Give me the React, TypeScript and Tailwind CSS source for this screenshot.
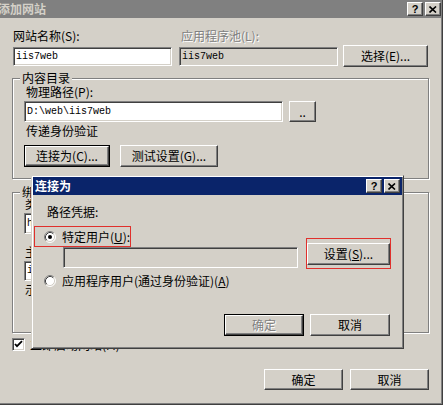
import type { ReactNode } from 'react';

// 经典 Windows 风格：添加网站 + 连接为 对话框

const RAISED =
  'border border-t-white border-l-white border-r-[#404040] border-b-[#404040] shadow-[inset_-1px_-1px_#808080]';
const SUNKEN =
  'border border-t-[#808080] border-l-[#808080] border-r-white border-b-white shadow-[inset_1px_1px_#404040,inset_-1px_-1px_#d4d0c8]';

function Btn({
  children,
  className = '',
  def = false,
  disabled = false,
}: {
  children: ReactNode;
  className?: string;
  def?: boolean;
  disabled?: boolean;
}) {
  return (
    <div className={`${className} bg-[#d4d0c8] ${def ? 'border border-black' : ''}`}>
      <div className={`flex h-full w-full items-center justify-center ${RAISED}`}>
        <span className={disabled ? 'text-[#808080] [text-shadow:1px_1px_0_#fff]' : 'text-black'}>
          {children}
        </span>
      </div>
    </div>
  );
}

function Field({
  value = '',
  className = '',
  disabled = false,
}: {
  value?: string;
  className?: string;
  disabled?: boolean;
}) {
  return (
    <div
      className={`${className} ${SUNKEN} ${
        disabled ? 'bg-[#d4d0c8]' : 'bg-white'
      } flex items-center pl-[2px] font-['Liberation_Mono',monospace] text-[10px]`}
    >
      {value}
    </div>
  );
}

function GroupBox({
  title,
  className = '',
  children,
}: {
  title: string;
  className?: string;
  children?: ReactNode;
}) {
  return (
    <div className={`relative border border-[#808080] shadow-[inset_1px_1px_#fff,1px_1px_#fff] ${className}`}>
      <span className="absolute left-[7px] -top-[8px] bg-[#d4d0c8] px-[2px] leading-[14px]">{title}</span>
      {children}
    </div>
  );
}

function Radio({ checked = false }: { checked?: boolean }) {
  return (
    <svg width="12" height="12" viewBox="0 0 12 12" className="shrink-0">
      <circle cx="6" cy="6" r="5" fill="#fff" />
      <path d="M2.11 9.89 A5.5 5.5 0 0 1 9.89 2.11" fill="none" stroke="#808080" />
      <path d="M9.89 2.11 A5.5 5.5 0 0 1 2.11 9.89" fill="none" stroke="#fff" />
      <path d="M2.82 9.18 A4.5 4.5 0 0 1 9.18 2.82" fill="none" stroke="#404040" />
      <path d="M9.18 2.82 A4.5 4.5 0 0 1 2.82 9.18" fill="none" stroke="#d4d0c8" />
      {checked && <circle cx="6" cy="6" r="2" fill="#000" />}
    </svg>
  );
}

function CheckBox() {
  return (
    <div className={`h-[13px] w-[13px] bg-white ${SUNKEN} flex items-center justify-center`}>
      <svg width="9" height="9" viewBox="0 0 9 9">
        <polyline points="1,4 3,6.2 8,1.2" fill="none" stroke="#000" strokeWidth="1.8" />
      </svg>
    </div>
  );
}

function CapButton({ kind }: { kind: 'help' | 'close' }) {
  return (
    <div className={`h-[14px] w-[16px] bg-[#d4d0c8] ${RAISED} flex items-center justify-center`}>
      {kind === 'help' ? (
        <span className="font-['Liberation_Sans',sans-serif] text-[11px] font-bold leading-[11px] text-black">?</span>
      ) : (
        <svg width="8" height="7" viewBox="0 0 8 7">
          <path d="M0.5 0.5 L7 6.5 M7 0.5 L0.5 6.5" stroke="#000" strokeWidth="1.6" />
        </svg>
      )}
    </div>
  );
}

function ConnectAsDialog() {
  return (
    <div className="absolute left-[31px] top-[175px] flex h-[174px] w-[373px] flex-col border border-t-[#d4d0c8] border-l-[#d4d0c8] border-r-[#404040] border-b-[#404040] bg-[#d4d0c8] p-[1px] shadow-[inset_1px_1px_#fff,inset_-1px_-1px_#808080]">
      {/* 标题栏 */}
      <div className="flex h-[18px] items-center bg-[#0a246a]">
        <span className="pl-[2px] font-bold text-white">连接为</span>
        <div className="ml-auto mr-[2px] flex gap-[2px]">
          <CapButton kind="help" />
          <CapButton kind="close" />
        </div>
      </div>

      <div className="ml-[14px] mt-[10px]">路径凭据:</div>

      <div className="ml-[1px] mt-[7px] flex h-[21px] w-[97px] items-center border border-[#e0302c]">
        <div className="ml-[9px]">
          <Radio checked />
        </div>
        <span className="ml-[6px] whitespace-nowrap">
          特定用户(<span className="underline">U</span>):
        </span>
      </div>

      <div className="flex items-start">
        <Field disabled className="ml-[30px] h-[21px] w-[235px]" />
        <div className="-mt-[9px] ml-[8px] h-[31px] w-[85px] border border-[#e0302c] pt-[4px]">
          <Btn className="h-[22px] w-full">
            设置(<span className="underline">S</span>)...
          </Btn>
        </div>
      </div>

      <div className="mt-[5px] flex h-[14px] items-center">
        <div className="ml-[11px]">
          <Radio />
        </div>
        <span className="ml-[6px] whitespace-nowrap">
          应用程序用户(通过身份验证)(<span className="underline">A</span>)
        </span>
      </div>

      <div className="mt-[26px] flex justify-end pr-[12px]">
        <Btn def disabled className="h-[22px] w-[80px]">
          确定
        </Btn>
        <Btn className="ml-[6px] h-[22px] w-[80px]">取消</Btn>
      </div>
    </div>
  );
}

export default function App() {
  return (
    <div className="relative h-[407px] w-[446px] overflow-hidden bg-white font-['Noto_Sans_CJK_SC',sans-serif] text-[12px] leading-[14px] text-black">
      <div className="flex h-[405px] w-[443px] flex-col border-b border-r border-[#404040] bg-[#d4d0c8] shadow-[inset_-1px_-1px_#808080]">
        {/* 标题栏（非活动） */}
        <div className="flex h-[18px] shrink-0 items-center bg-[#808080]">
          <span className="-ml-[2px] font-bold text-[#d4d0c8]">添加网站</span>
          <div className="ml-auto mr-[1px] flex gap-[2px]">
            <CapButton kind="help" />
            <CapButton kind="close" />
          </div>
        </div>

        <div className="flex flex-col pl-[13px] pr-[13px]">
          {/* 网站名称 / 应用程序池 */}
          <div className="mt-[11px] flex">
            <span className="w-[166px]">网站名称(S):</span>
            <span className="pl-[2px] text-[#808080] [text-shadow:1px_1px_0_#fff]">应用程序池(L):</span>
          </div>
          <div className="mt-[2px] flex h-[22px] items-start">
            <Field value="iis7web" className="mt-[2px] h-[19px] w-[159px]" />
            <Field value="iis7web" disabled className="ml-[7px] mt-[2px] h-[19px] w-[159px]" />
            <Btn className="ml-[5px] h-[22px] w-[85px]">选择(E)...</Btn>
          </div>

          {/* 内容目录 */}
          <GroupBox title="内容目录" className="-ml-[1px] mt-[11px] h-[101px] w-[417px] pl-[11px] pt-[6px]">
            <div className="ml-[2px]">物理路径(P):</div>
            <div className="mt-[2px] flex">
              <Field value="D:\web\iis7web" className="h-[21px] w-[259px]" />
              <Btn className="ml-[6px] h-[21px] w-[27px]">..</Btn>
            </div>
            <div className="ml-[2px] mt-[2px]">传递身份验证</div>
            <div className="mt-[7px] flex">
              <Btn def className="h-[22px] w-[86px]">
                连接为(C)...
              </Btn>
              <Btn className="ml-[10px] h-[22px] w-[98px]">测试设置(G)...</Btn>
            </div>
          </GroupBox>

          {/* 绑定 */}
          <GroupBox title="绑定" className="-ml-[1px] mt-[13px] h-[141px] w-[417px] pl-[11px] pt-[4px]">
            <div className="flex">
              <span className="ml-[1px] w-[90px]">类型(T):</span>
              <span className="w-[150px]">IP 地址(I):</span>
              <span>端口(O):</span>
            </div>
            <div className="mt-[2px] flex">
              <Field value="http" className="h-[21px] w-[80px]" />
              <Field value="全部未分配" className="ml-[10px] h-[21px] w-[140px]" />
              <Field value="80" className="ml-[10px] h-[21px] w-[50px]" />
            </div>
            <div className="ml-[1px] mt-[11px]">主机名(H):</div>
            <Field value="iis7web" className="mt-[2px] h-[20px] w-[360px]" />
            <div className="ml-[1px] mt-[2px]">示例: www.contoso.com 或 marketing.contoso.com</div>
          </GroupBox>

          <div className="-ml-[1px] mt-[5px] flex h-[13px] items-center">
            <CheckBox />
            <span className="ml-[5px]">立即启动网站(M)</span>
          </div>

          <div className="mt-[18px] flex justify-end">
            <Btn className="h-[21px] w-[79px]">确定</Btn>
            <Btn className="ml-[7px] h-[21px] w-[79px]">取消</Btn>
          </div>
        </div>
      </div>

      <ConnectAsDialog />
    </div>
  );
}
